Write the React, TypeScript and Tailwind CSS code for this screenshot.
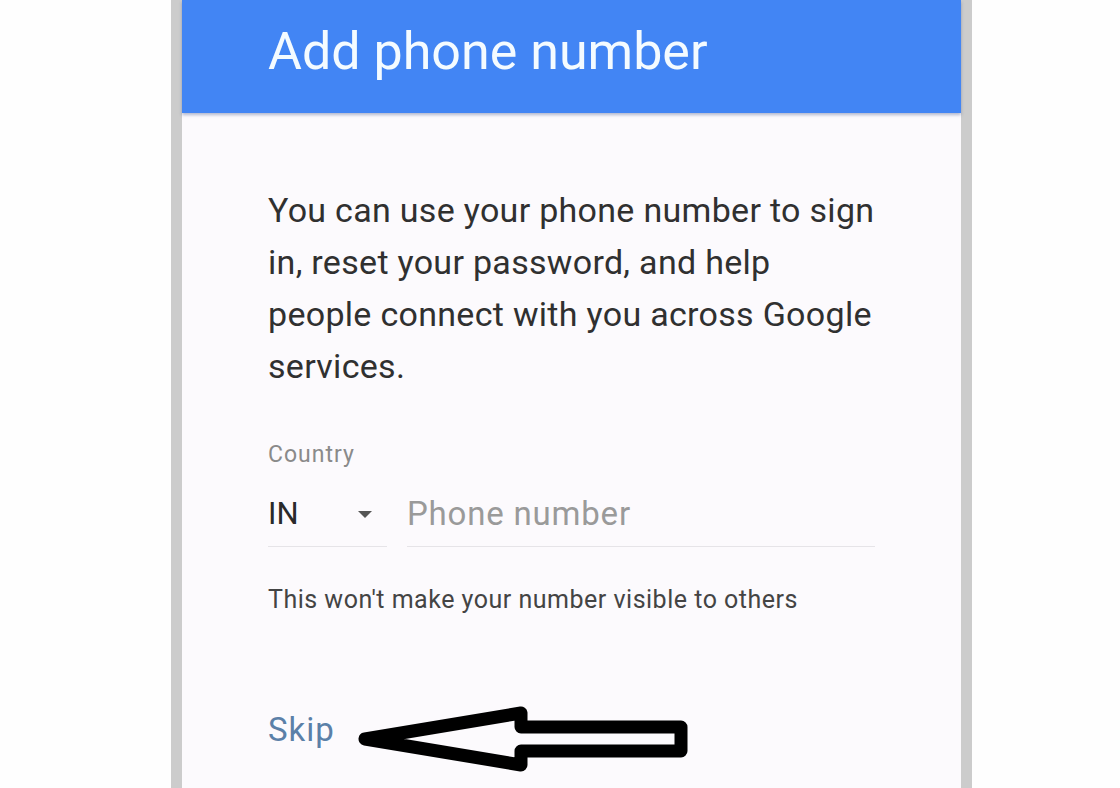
import React from "react";

const font = { fontFamily: "Roboto, 'Noto Sans', Arial, sans-serif" };

const BackArrow = () => (
  <svg width="340" height="76" viewBox="0 0 340 76" className="shrink-0">
    <polygon
      points="12,38 168,12 168,26 328,26 328,50 168,50 168,64"
      fill="none"
      stroke="#000"
      strokeWidth="13"
      strokeLinejoin="round"
    />
  </svg>
);

const App = () => {
  return (
    <div className="w-[1120px] h-[788px] bg-[#fefefe] pl-[171px] overflow-hidden" style={font}>
      <div className="flex h-full w-[801px] border-x-[11px] border-[#cccccc]">
        <div className="flex flex-col w-full bg-[#fcfafd]">
          {/* Header */}
          <div className="h-[113px] shrink-0 bg-[#4285f4] pl-[86px] pt-[22px] shadow-[0_2px_3px_rgba(40,60,120,0.35)]">
            <h1 className="text-[52px] leading-[60px] text-[#f4fbff] font-normal">Add phone number</h1>
          </div>

          <div className="pl-[86px] pt-[71px]">
            <p className="text-[34px] leading-[52px] tracking-[0.3px] text-[#303030] whitespace-nowrap">
              You can use your phone number to sign
              <br />
              in, reset your password, and help
              <br />
              people connect with you across Google
              <br />
              services.
            </p>

            {/* Phone field */}
            <div className="mt-[49px] text-[23px] leading-[28px] tracking-[1px] text-[#8a8a8a]">Country</div>
            <div className="flex gap-[20px] mt-[27px]">
              <div className="w-[119px] flex items-center justify-between border-b border-[#e6e4e8] pb-[14px]">
                <span className="text-[31px] leading-[36px] text-[#2a2a2a]">IN</span>
                <span className="mr-[15px] w-0 h-0 border-x-[7px] border-x-transparent border-t-[7px] border-t-[#555]" />
              </div>
              <div className="w-[468px] border-b border-[#e6e4e8] pb-[14px]">
                <span className="text-[33px] leading-[36px] tracking-[0.8px] text-[#9a9a9a]">Phone number</span>
              </div>
            </div>
            <div className="mt-[38px] text-[25px] leading-[30px] tracking-[0.5px] text-[#444444]">
              This won't make your number visible to others
            </div>

            {/* Skip */}
            <div className="flex items-start mt-[95px]">
              <span className="text-[33px] leading-[40px] tracking-[1px] text-[#5b80a8]">Skip</span>
              <div className="ml-[18px] mt-[-9px]">
                <BackArrow />
              </div>
            </div>
          </div>
        </div>
      </div>
    </div>
  );
};

export default App;
